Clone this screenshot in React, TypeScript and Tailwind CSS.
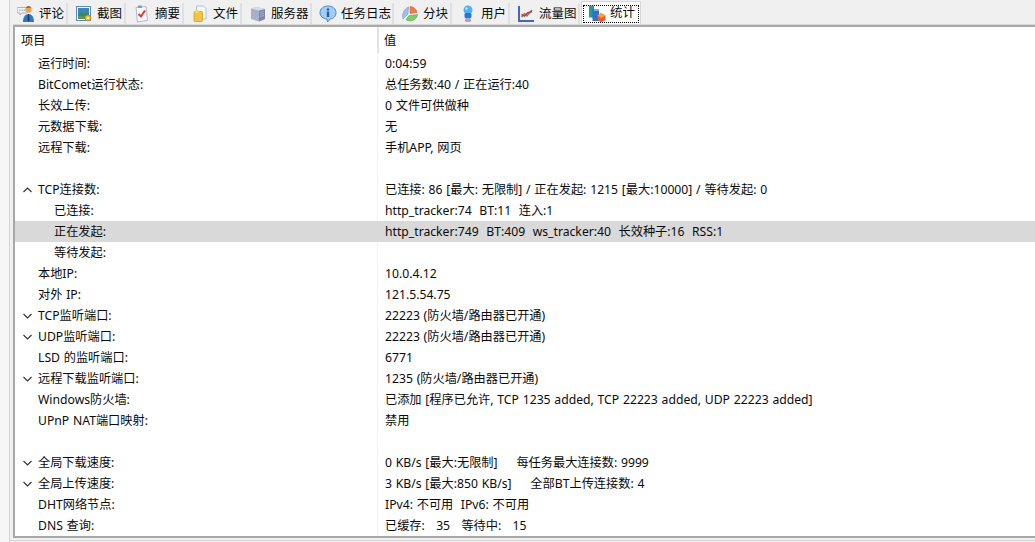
const tabs = [
  { label: "评论", width: "w-[58px]", icon: <CommentIcon /> },
  { label: "截图", width: "w-[58px]", icon: <ShotIcon /> },
  { label: "摘要", width: "w-[58px]", icon: <SummaryIcon /> },
  { label: "文件", width: "w-[58px]", icon: <FileIcon /> },
  { label: "服务器", width: "w-[70px]", icon: <ServerIcon /> },
  { label: "任务日志", width: "w-[82px]", icon: <InfoIcon /> },
  { label: "分块", width: "w-[58px]", icon: <PieIcon /> },
  { label: "用户", width: "w-[58px]", icon: <UserIcon /> },
  { label: "流量图", width: "w-[70px]", icon: <ChartIcon /> },
];

type Row = { name?: string; value?: string; level?: number; arrow?: "up" | "down"; selected?: boolean };

const rows: Row[] = [
  { name: "运行时间:", value: "0:04:59" },
  { name: "BitComet运行状态:", value: "总任务数:40 / 正在运行:40" },
  { name: "长效上传:", value: "0 文件可供做种" },
  { name: "元数据下载:", value: "无" },
  { name: "远程下载:", value: "手机APP, 网页" },
  {},
  { name: "TCP连接数:", value: "已连接: 86 [最大: 无限制] / 正在发起: 1215 [最大:10000] / 等待发起: 0", arrow: "up" },
  { name: "已连接:", value: "http_tracker:74  BT:11  连入:1", level: 1 },
  { name: "正在发起:", value: "http_tracker:749  BT:409  ws_tracker:40  长效种子:16  RSS:1", level: 1, selected: true },
  { name: "等待发起:", level: 1 },
  { name: "本地IP:", value: "10.0.4.12" },
  { name: "对外 IP:", value: "121.5.54.75" },
  { name: "TCP监听端口:", value: "22223 (防火墙/路由器已开通)", arrow: "down" },
  { name: "UDP监听端口:", value: "22223 (防火墙/路由器已开通)", arrow: "down" },
  { name: "LSD 的监听端口:", value: "6771" },
  { name: "远程下载监听端口:", value: "1235 (防火墙/路由器已开通)", arrow: "down" },
  { name: "Windows防火墙:", value: "已添加 [程序已允许, TCP 1235 added, TCP 22223 added, UDP 22223 added]" },
  { name: "UPnP NAT端口映射:", value: "禁用" },
  {},
  { name: "全局下载速度:", value: "0 KB/s [最大:无限制]     每任务最大连接数: 9999", arrow: "down" },
  { name: "全局上传速度:", value: "3 KB/s [最大:850 KB/s]     全部BT上传连接数: 4", arrow: "down" },
  { name: "DHT网络节点:", value: "IPv4: 不可用  IPv6: 不可用" },
  { name: "DNS 查询:", value: "已缓存:   35   等待中:   15" },
];

function CommentIcon() {
  return (
    <svg width="18" height="18" viewBox="0 0 18 18">
      <path d="M1 2.500h8.500a1 1 0 0 1 1 1V7a1 1 0 0 1-1 1H5L3 10V8H1a1 1 0 0 1-1-1V3.500a1 1 0 0 1 1-1z" fill="#eef1f5" stroke="#aab2bc" />
      <circle cx="3" cy="5.200" r=".7" fill="#9aa3ad" />
      <circle cx="5.200" cy="5.200" r=".7" fill="#9aa3ad" />
      <circle cx="7.400" cy="5.200" r=".7" fill="#9aa3ad" />
      <circle cx="11.500" cy="4.500" r="3.200" fill="#e9a456" />
      <path d="M9 2.500c1-1.800 4.500-1.800 5.500.3l-1.700-.4-2 .6z" fill="#8a5a2a" />
      <path d="M6 17c0-5 2-8 5.500-8S17 12 17 17z" fill="#2f78c4" />
      <path d="M11 9h1l.6 6-1.100 1.500-1-1.500z" fill="#1c3a66" />
    </svg>
  );
}

function ShotIcon() {
  return (
    <svg width="18" height="18" viewBox="0 0 18 18">
      <rect x="1.500" y="1.500" width="14" height="14" fill="#f4f8fc" stroke="#5f8bb8" />
      <rect x="3" y="3" width="11" height="8" fill="#3f86b5" />
      <path d="M3 11l3-4 3 2 2-2 3 4z" fill="#3c8c4a" />
      <rect x="3" y="11" width="7" height="3" fill="#5f8f5a" />
      <circle cx="13" cy="13" r="3" fill="#eebb33" stroke="#a87a14" strokeWidth=".7" />
      <circle cx="13" cy="13" r="1" fill="#fff6d0" />
    </svg>
  );
}

function SummaryIcon() {
  return (
    <svg width="18" height="18" viewBox="0 0 18 18">
      <path d="M3 2.500l10-1 1.500 14-10 1.500z" fill="#f6f9fd" stroke="#a8bcd6" />
      <rect x="5" y="0.500" width="4" height="2.500" fill="#7f9cc4" />
      <path d="M5.500 9l2.500 2.500L12 5.500" fill="none" stroke="#e0392b" strokeWidth="2" />
    </svg>
  );
}

function FileIcon() {
  return (
    <svg width="18" height="18" viewBox="0 0 18 18">
      <path d="M5.500 1h7l2.500 2.500V14h-9.500z" fill="#f4f7fb" stroke="#b4c0d0" />
      <rect x="3" y="6.500" width="8.500" height="10" rx="1" fill="#f3c440" stroke="#c9952a" strokeWidth=".7" />
      <rect x="4" y="5" width="4" height="3" rx=".7" fill="#f8d668" />
    </svg>
  );
}

function ServerIcon() {
  return (
    <svg width="18" height="18" viewBox="0 0 18 18">
      <path d="M2 3.500L8 2l8 2v10l-6 2.500-8-2.500z" fill="#a9b0cc" />
      <path d="M10 5.500l6-1.500v10l-6 2.500z" fill="#7f86a8" />
      <path d="M2 3.500L8 2l8 2-6 1.500z" fill="#d9dcea" />
      <path d="M11 7.500l4-1M11 9.500l4-1M11 11.500l4-1" stroke="#b8bdd4" strokeWidth=".7" />
    </svg>
  );
}

function InfoIcon() {
  return (
    <svg width="18" height="18" viewBox="0 0 18 18">
      <path d="M9 1c4.500 0 8 2.800 8 6.800 0 3.500-2.800 6-6 6.300L8.500 17l-.5-3C4 13.600 1 11.200 1 7.800 1 3.800 4.500 1 9 1z" fill="#a5cdf2" stroke="#4a86c6" />
      <circle cx="9" cy="4.500" r="1.200" fill="#1d5fa8" />
      <rect x="7.800" y="6.500" width="2.400" height="5.500" fill="#1d5fa8" />
    </svg>
  );
}

function PieIcon() {
  return (
    <svg width="18" height="18" viewBox="0 0 18 18">
      <path d="M9 1.500c3.500.2 6.500 2.500 7 6l-7 1z" fill="#ee7b4a" stroke="#c85a30" strokeWidth=".5" />
      <path d="M7.500 2L7 9l-5 5C.500 10 2.500 4 7.500 2z" fill="#9cc3e8" stroke="#5f92c4" strokeWidth=".5" />
      <path d="M8 10.500l8.500-1c0 3.500-4 6.500-7.500 6.500-1.500 0-3-.5-4-1.500z" fill="#7ccd6a" stroke="#4ba040" strokeWidth=".5" />
    </svg>
  );
}

function UserIcon() {
  return (
    <svg width="18" height="18" viewBox="0 0 18 18">
      <ellipse cx="9" cy="5" rx="4.500" ry="4.500" fill="#55aef0" />
      <rect x="5.500" y="8" width="7" height="5" rx="1.500" fill="#2278d8" />
      <rect x="6" y="13" width="6" height="4" rx="1.500" fill="#a8a4c4" />
      <circle cx="7.500" cy="3.500" r="1.200" fill="#c5e6fb" />
    </svg>
  );
}

function ChartIcon() {
  return (
    <svg width="18" height="18" viewBox="0 0 18 18">
      <path d="M2 1v15h15" fill="none" stroke="#4a62c8" strokeWidth="2" />
      <path d="M4.500 12l3-3.500 2.500 2.500 5-6" fill="none" stroke="#3fae49" strokeWidth="1.500" />
      <path d="M4.500 9.500l3 1.500 3-3 4.500-1.500" fill="none" stroke="#e0265f" strokeWidth="1.500" />
    </svg>
  );
}

function StatsIcon() {
  return (
    <svg width="18" height="18" viewBox="0 0 18 18">
      <rect x="1" y="0.500" width="5" height="12" fill="#2a9a8c" />
      <rect x="4.500" y="4" width="6.500" height="12" fill="#2e6fd0" />
      <path d="M6 4h5v2H6z" fill="#7fb0ea" />
      <path d="M13 8l4.500 2.500V15L13 17.500 9.500 15v-4.500z" fill="#ee5a28" />
      <path d="M13 8l4.500 2.500L13 13l-3.500-2.500z" fill="#f7a23c" />
    </svg>
  );
}

function Arrow({ dir }: { dir: "up" | "down" }) {
  return (
    <svg width="9" height="6" viewBox="0 0 9 6" className="mr-[6px] shrink-0">
      <path d={dir === "up" ? "M.5 5L4.500 1l4 4" : "M.5 1l4 4 4-4"} fill="none" stroke="#303030" strokeWidth="1.100" />
    </svg>
  );
}

export default function App() {
  return (
    <div
      className="flex h-[542px] w-[1035px] overflow-hidden bg-[#f6f6f6] text-[12.5px] text-[#0a0a0a]"
      style={{ fontFamily: '"Noto Sans", "Noto Sans CJK SC", sans-serif' }}
    >
      {/* left gutter */}
      <div className="w-[10px] shrink-0 border-r border-[#d4d4d4]" />

      <div className="flex min-w-0 flex-1 flex-col bg-[#f0f0f0]">
        {/* tab strip */}
        <div className="flex h-[25px] shrink-0 items-end pt-[1px]">
          {tabs.map((t) => (
            <div key={t.label} className={`flex h-[22px] shrink-0 items-center border-r-2 border-[#e0e0e0] pl-[7px] ${t.width}`}>
              <span className="mr-[4px] flex w-[18px] justify-center">{t.icon}</span>
              <span className="whitespace-nowrap pt-[1px]">{t.label}</span>
            </div>
          ))}
          <div className="ml-[1px] flex h-[24px] w-[60px] shrink-0 items-center border border-b-0 border-[#d8d8d8] bg-white pl-[1px]">
            <div className="flex h-[18px] w-[56px] items-center border border-dotted border-black pl-[4px]">
              <span className="mr-[4px]"><StatsIcon /></span>
              <span className="whitespace-nowrap">统计</span>
            </div>
          </div>
        </div>

        {/* list view */}
        <div className="ml-[3px] flex min-h-0 flex-1 flex-col border-t-2 border-b-2 border-l-2 border-[#a8a8a8] bg-white text-[12.2px] [word-spacing:0.6px] shadow-[0_-1px_0_#d8d8d8]">
          <div className="flex h-[26px] shrink-0 items-center">
            <div className="w-[362px] pl-[6px] pt-[2px]">项目</div>
            <div className="h-full w-[2px] bg-[#e4e4e4]" />
            <div className="pl-[5px] pt-[2px]">值</div>
          </div>
          {rows.map((r, i) => (
            <div key={i} className={`flex h-[21px] shrink-0 items-center ${r.selected ? "bg-[#d9d9d9]" : ""}`}>
              <div className={`flex w-[362px] items-center whitespace-nowrap pt-[2px] ${r.level ? "pl-[39px]" : r.arrow ? "pl-[8px]" : "pl-[23px]"}`}>
                {r.arrow && <Arrow dir={r.arrow} />}
                {r.name}
              </div>
              <div className={`h-full w-[1px] ${r.selected ? "" : "bg-[#eef4fb]"}`} />
              <div className="whitespace-pre pl-[7px] pt-[2px]">{r.value}</div>
            </div>
          ))}
        </div>

        {/* bottom edge */}
        <div className="h-[4px] shrink-0 pt-[2px]">
          <div className="h-[1px] bg-[#d4d4d4]" />
        </div>
      </div>
    </div>
  );
}
